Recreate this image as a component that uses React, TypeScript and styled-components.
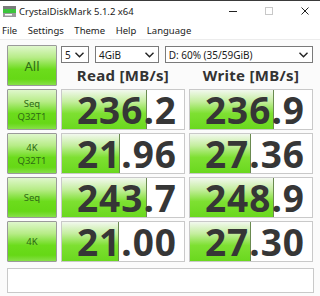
import React from 'react';
import styled, { createGlobalStyle } from 'styled-components';

const GlobalStyle = createGlobalStyle`
  html, body {
    margin: 0;
    padding: 0;
    background: #ffffff;
  }
  body {
    font-family: 'Noto Sans', 'Open Sans', sans-serif;
    color: #1a1a1a;
  }
`;

type Result = { label: string[]; read: string; readBar: number; write: string; writeBar: number };

const results: Result[] = [
  { label: ['Seq', 'Q32T1'], read: '236.2', readBar: 84, write: '236.9', writeBar: 83 },
  { label: ['4K', 'Q32T1'], read: '21.96', readBar: 57, write: '27.36', writeBar: 60 },
  { label: ['Seq'], read: '243.7', readBar: 84, write: '248.9', writeBar: 83 },
  { label: ['4K'], read: '21.00', readBar: 56, write: '27.30', writeBar: 60 },
];

const Window = styled.div`
  width: 320px;
  height: 296px;
  display: flex;
  flex-direction: column;
  background: #fbfbfb;
  overflow: hidden;
`;

const TitleBar = styled.div`
  height: 20px;
  border-top: 1px solid #3a3a3a;
  background: #ffffff;
  display: flex;
  align-items: center;
  padding-left: 3px;
  font-size: 9.5px;
  color: #1a1a1a;
`;

const TitleText = styled.span`
  margin-left: 3px;
  flex: 1;
`;

const WinButtons = styled.div`
  display: flex;
  align-items: center;
  height: 100%;
  margin-right: -3px;
`;

const WinButton = styled.div`
  width: 36px;
  height: 100%;
  display: flex;
  align-items: center;
  justify-content: center;
`;

const MenuBar = styled.div`
  height: 18px;
  display: flex;
  align-items: center;
  background: #ffffff;
  border-bottom: 1px solid #ececec;
  font-size: 9.5px;
  padding-left: 2px;
`;

const MenuItem = styled.span`
  margin-right: 10.5px;
`;

const Main = styled.div`
  display: grid;
  grid-template-columns: 50px 124px 124px;
  grid-auto-rows: 41px;
  column-gap: 4px;
  row-gap: 3px;
  padding: 5px 0 0 7px;
`;

const TestButton = styled.div<{ $big?: boolean }>`
  box-sizing: border-box;
  border: 1px solid #9a9a9a;
  border-radius: 1px;
  background: linear-gradient(#dff7cc 0%, #b6ec86 30%, #6cdc1c 60%, #66d816 85%, #86e048 100%);
  display: flex;
  flex-direction: column;
  align-items: center;
  justify-content: center;
  color: #2f6a14;
  font-size: ${p => (p.$big ? '13px' : '9.5px')};
  line-height: ${p => (p.$big ? '16px' : '13px')};
`;

const HeaderArea = styled.div`
  grid-column: 2 / span 2;
  display: flex;
  flex-direction: column;
`;

const ComboRow = styled.div`
  display: flex;
  gap: 6px;
  height: 17px;
  margin-top: 1px;
`;

const Combo = styled.div<{ $w: number }>`
  box-sizing: border-box;
  width: ${p => p.$w}px;
  height: 17px;
  border: 1px solid #7a7a7a;
  background: #ffffff;
  display: flex;
  align-items: center;
  justify-content: space-between;
  padding: 0 4px 0 3px;
  font-size: 10px;
  color: #1a1a1a;
`;

const Headers = styled.div`
  display: grid;
  grid-template-columns: 124px 124px;
  column-gap: 4px;
  flex: 1;
  align-items: center;
`;

const Header = styled.div`
  text-align: center;
  font-weight: bold;
  font-size: 15px;
  color: #333333;
  letter-spacing: 0.3px;
`;

const Cell = styled.div`
  position: relative;
  box-sizing: border-box;
  border: 1px solid #c9c9c9;
  background: #ffffff;
`;

const Bar = styled.div`
  position: absolute;
  left: 0;
  top: 0;
  bottom: 0;
  background: linear-gradient(#f2f8ee 0%, #c4ee9e 30%, #7ee032 60%, #6ad81e 100%);
  border-right: 1px solid #6a8a50;
`;

const Value = styled.div`
  position: relative;
  height: 100%;
  display: flex;
  align-items: center;
  justify-content: flex-end;
  padding-right: 7px;
  font-family: 'Noto Sans', sans-serif;
  font-weight: bold;
  font-size: 37px;
  line-height: 1;
  letter-spacing: 1px;
  color: #363636;
`;

const Comment = styled.div`
  box-sizing: border-box;
  margin: 6px 0 0 7px;
  width: 307px;
  height: 25px;
  border: 1px solid #c9c9c9;
  background: #ffffff;
`;

const Chevron = () => (
  <svg width="9" height="6" viewBox="0 0 9 6">
    <path d="M0.5 0.8 L4.5 4.8 L8.5 0.8" fill="none" stroke="#222" strokeWidth="1.4" />
  </svg>
);

const AppIcon = () => (
  <svg width="13" height="11" viewBox="0 0 13 11">
    <rect x="0" y="0" width="13" height="3" fill="#7a7a7a" />
    <rect x="0" y="3" width="13" height="4" fill="#3cc43c" />
    <rect x="0" y="7" width="13" height="4" fill="#9a9a9a" />
    <rect x="2" y="8" width="7" height="1.5" fill="#ffffff" />
  </svg>
);

export default function App() {
  return (
    <>
      <GlobalStyle />
      <Window>
        <TitleBar>
          <AppIcon />
          <TitleText>CrystalDiskMark 5.1.2 x64</TitleText>
          <WinButtons>
            <WinButton>
              <svg width="8" height="8" viewBox="0 0 8 8">
                <path d="M0 4.5 H8" stroke="#222" strokeWidth="1" />
              </svg>
            </WinButton>
            <WinButton>
              <svg width="8" height="8" viewBox="0 0 8 8">
                <rect x="0.5" y="0.5" width="7" height="7" fill="none" stroke="#c8c8c8" strokeWidth="1" />
              </svg>
            </WinButton>
            <WinButton>
              <svg width="8" height="8" viewBox="0 0 8 8">
                <path d="M0.5 0.5 L7.5 7.5 M7.5 0.5 L0.5 7.5" stroke="#222" strokeWidth="1" />
              </svg>
            </WinButton>
          </WinButtons>
        </TitleBar>
        <MenuBar>
          <MenuItem>File</MenuItem>
          <MenuItem>Settings</MenuItem>
          <MenuItem>Theme</MenuItem>
          <MenuItem>Help</MenuItem>
          <MenuItem>Language</MenuItem>
        </MenuBar>
        <Main>
          <TestButton $big>All</TestButton>
          <HeaderArea>
            <ComboRow>
              <Combo $w={28}>5<Chevron /></Combo>
              <Combo $w={64}>4GiB<Chevron /></Combo>
              <Combo $w={149}>D: 60% (35/59GiB)<Chevron /></Combo>
            </ComboRow>
            <Headers>
              <Header>Read [MB/s]</Header>
              <Header>Write [MB/s]</Header>
            </Headers>
          </HeaderArea>
          {results.map(r => (
            <React.Fragment key={r.label.join(' ')}>
              <TestButton>
                {r.label.map(l => (
                  <span key={l}>{l}</span>
                ))}
              </TestButton>
              <Cell>
                <Bar style={{ width: r.readBar }} />
                <Value>{r.read}</Value>
              </Cell>
              <Cell>
                <Bar style={{ width: r.writeBar }} />
                <Value>{r.write}</Value>
              </Cell>
            </React.Fragment>
          ))}
        </Main>
        <Comment />
      </Window>
    </>
  );
}
